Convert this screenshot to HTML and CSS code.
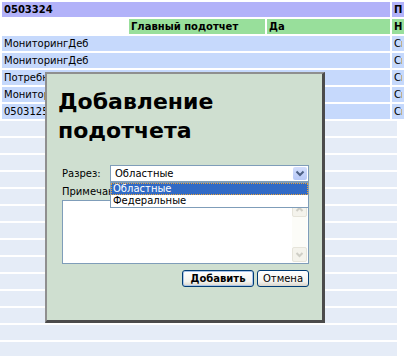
FILE: index.html
```html
<!DOCTYPE html>
<html lang="ru">
<head>
    <meta charset="UTF-8">
    <meta name="viewport" content="width=device-width, initial-scale=1.0">
    <title>Подотчеты</title>
    <link rel="stylesheet" href="styles.css">
</head>
<body>
    <table class="grid">
        <colgroup>
            <col class="col-name">
            <col class="col-main">
            <col class="col-flag">
            <col class="col-extra">
        </colgroup>
        <tr class="row-head">
            <td colspan="3">0503324</td>
            <td><span class="cut">Подотчеты</span></td>
        </tr>
        <tr class="row-sub">
            <td class="blank"></td>
            <td>Главный подотчет</td>
            <td>Да</td>
            <td><span class="cut">Наименование</span></td>
        </tr>
        <tr class="row-item">
            <td colspan="3">МониторингДеб</td>
            <td><span class="cut">Сводный</span></td>
        </tr>
        <tr class="row-item">
            <td colspan="3">МониторингДеб</td>
            <td><span class="cut">Сводный</span></td>
        </tr>
        <tr class="row-item">
            <td colspan="3">ПотребностьВФинансировании</td>
            <td><span class="cut">Сводный</span></td>
        </tr>
        <tr class="row-item">
            <td colspan="3">МониторингКредиторской</td>
            <td><span class="cut">Сводный</span></td>
        </tr>
        <tr class="row-item">
            <td colspan="3">0503125</td>
            <td><span class="cut">Сводный</span></td>
        </tr>
    </table>

    <div class="empty-rows">
        <div class="empty-row"></div>
        <div class="empty-row"></div>
        <div class="empty-row"></div>
        <div class="empty-row"></div>
        <div class="empty-row"></div>
        <div class="empty-row"></div>
        <div class="empty-row"></div>
        <div class="empty-row"></div>
        <div class="empty-row"></div>
        <div class="empty-row"></div>
        <div class="empty-row"></div>
        <div class="empty-row"></div>
        <div class="empty-row"></div>
        <div class="empty-row"></div>
    </div>

    <!-- модальное окно добавления -->
    <div class="dialog">
        <h1 class="dialog-title">Добавление подотчета</h1>

        <div class="field">
            <span class="field-label">Разрез:</span>
            <div class="combo">
                <span class="combo-value">Областные</span>
                <span class="combo-btn">
                    <svg width="14" height="13" viewBox="0 0 14 13">
                        <path d="M3.5 4.5 L7 8 L10.5 4.5" fill="none" stroke="#4d6185" stroke-width="2"/>
                    </svg>
                </span>
                <ul class="combo-list">
                    <li class="combo-item selected">Областные</li>
                    <li class="combo-item">Федеральные</li>
                </ul>
            </div>
        </div>

        <div class="note-label">Примечание:</div>
        <div class="note">
            <div class="scrollbar">
                <span class="scroll-btn">
                    <svg width="13" height="13" viewBox="0 0 13 13">
                        <path d="M3.5 8 L6.5 5 L9.5 8" fill="none" stroke="#cfcec6" stroke-width="2"/>
                    </svg>
                </span>
                <span class="scroll-btn">
                    <svg width="13" height="13" viewBox="0 0 13 13">
                        <path d="M3.5 5 L6.5 8 L9.5 5" fill="none" stroke="#cfcec6" stroke-width="2"/>
                    </svg>
                </span>
            </div>
        </div>

        <div class="actions">
            <button class="btn btn-default">Добавить</button>
            <button class="btn btn-cancel">Отмена</button>
        </div>
    </div>
</body>
</html>
```

FILE: styles.css
```css
* {
    margin: 0;
    padding: 0;
    box-sizing: border-box;
}

body {
    font-family: 'DejaVu Sans', Verdana, sans-serif;
    font-size: 10px;
    color: #000;
    background-color: #fff;
    overflow: hidden;
}

/* таблица подотчетов */
.grid {
    border-collapse: separate;
    border-spacing: 2px;
    table-layout: fixed;
    width: 434px;
}

.col-name { width: 125px; }
.col-main { width: 136px; }
.col-flag { width: 123px; }
.col-extra { width: 40px; }

.grid td {
    height: 15px;
    line-height: 15px;
    padding: 0 2px;
    white-space: nowrap;
    overflow: hidden;
}

.cut {
    display: block;
    width: 8px;
    overflow: hidden;
}

.row-head td {
    background-color: #b2b2f9;
    font-weight: bold;
}

.row-sub td {
    background-color: #98df9b;
    font-weight: bold;
}

.row-sub td.blank {
    background: none;
}

.row-item td {
    background-color: #c6d9fc;
}

.empty-rows {
    width: 397px;
}

.empty-row {
    height: 15px;
    margin-bottom: 2px;
    background-color: #e5ecf7;
}

/* диалог */
.dialog {
    position: absolute;
    left: 45px;
    top: 72px;
    width: 280px;
    height: 251px;
    background-color: #cfdfd0;
    border-top: 2px solid #8f8f8f;
    border-left: 2px solid #8f8f8f;
    border-right: 3px solid #4b4b4b;
    border-bottom: 3px solid #4b4b4b;
    padding: 13px 13px 0 15px;
}

.dialog-title {
    font-size: 22px;
    line-height: 29px;
    font-weight: bold;
    margin-left: -4px;
}

.field {
    display: flex;
    align-items: center;
    margin-top: 20px;
    height: 17px;
}

.field-label {
    width: 48px;
}

.combo {
    position: relative;
    width: 199px;
    height: 17px;
    border: 1px solid #7f9db9;
    background-color: #fff;
    line-height: 15px;
}

.combo-value {
    padding-left: 4px;
}

.combo-btn {
    position: absolute;
    right: 1px;
    top: 1px;
    width: 14px;
    height: 13px;
    border-radius: 2px;
    background: linear-gradient(#d3defc, #b7c9f7);
    display: flex;
}

.combo-list {
    position: absolute;
    left: -1px;
    top: 16px;
    width: 199px;
    list-style: none;
    background-color: #fff;
    border: 1px solid #7f9db9;
    z-index: 2;
}

.combo-item {
    height: 12px;
    line-height: 12px;
    padding-left: 2px;
}

.combo-item.selected {
    background-color: #316ac5;
    color: #fff;
    outline: 1px dotted #e8a23a;
    outline-offset: -1px;
}

.note-label {
    margin-top: 3px;
    line-height: 13px;
}

.note {
    position: relative;
    margin-top: 2px;
    width: 247px;
    height: 64px;
    border: 1px solid #7f9db9;
    background-color: #fff;
}

.scrollbar {
    position: absolute;
    right: 1px;
    top: 1px;
    bottom: 1px;
    width: 15px;
    background-color: #fcfcf8;
    display: flex;
    flex-direction: column;
    justify-content: space-between;
}

.scroll-btn {
    display: flex;
    width: 15px;
    height: 15px;
    border: 1px solid #e6e4da;
    border-radius: 2px;
    background-color: #f4f3ec;
}

.actions {
    display: flex;
    justify-content: flex-end;
    gap: 3px;
    width: 247px;
    margin-top: 6px;
}

.btn {
    height: 17px;
    font-family: 'DejaVu Sans', Verdana, sans-serif;
    font-size: 10px;
    line-height: 15px;
    color: #000;
    border: 1px solid #003c74;
    border-radius: 3px;
    background: linear-gradient(#ffffff, #f3f3ef 70%, #d9d5cb);
    cursor: pointer;
}

.btn-default {
    width: 72px;
    font-weight: bold;
    box-shadow: inset 0 0 0 1px #a9c3e8;
}

.btn-cancel {
    width: 52px;
}
```
